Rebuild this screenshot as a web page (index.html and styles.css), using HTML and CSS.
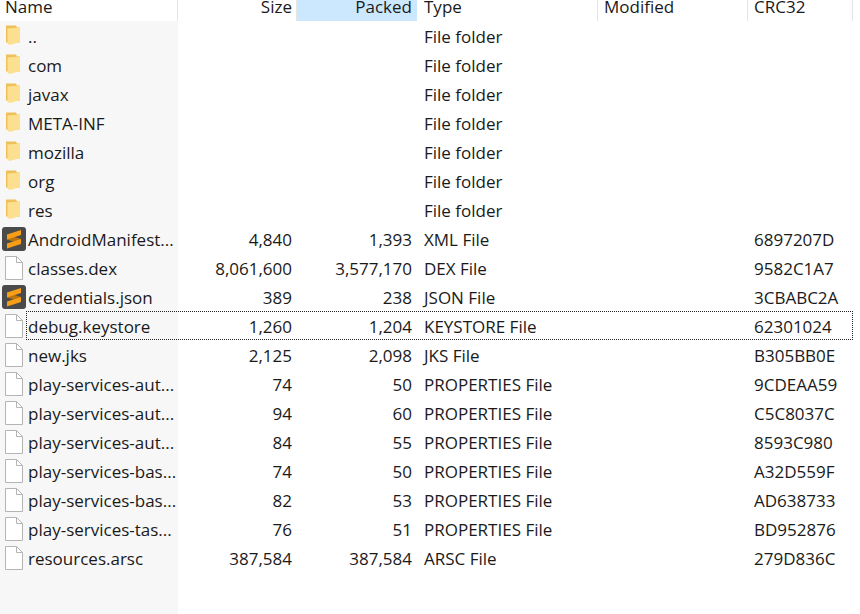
FILE: index.html
```html
<!DOCTYPE html>
<html lang="en">
<head>
    <meta charset="UTF-8">
    <title>Archive</title>
    <link rel="stylesheet" href="styles.css">
</head>
<body>
    <svg class="defs" width="0" height="0">
        <symbol id="folder" viewBox="0 0 24 24">
            <path d="M4 1.500h10l1 2h3v15H4z" fill="#efc05a"/>
            <path d="M5.500 4.500l12.500-1v14.500l-10 3-2.500-1z" fill="#fde08f"/>
        </symbol>
        <symbol id="file" viewBox="0 0 24 24">
            <path d="M3.500 .5h11l6 6v17h-17z" fill="#fff" stroke="#b4b4b4"/>
            <path d="M14.500 .5v6h6" fill="none" stroke="#b4b4b4"/>
        </symbol>
        <symbol id="sublime" viewBox="0 0 24 24">
            <rect width="24" height="24" rx="3" fill="#4a4a4a"/>
            <path d="M5 7.500l14 4.500v5L5 12.500z" fill="#b8720f"/>
            <path d="M19 3v5L5 12.500v-5z" fill="#f79e16"/>
            <path d="M19 12v5L5 21.500v-5z" fill="#f79e16"/>
        </symbol>
    </svg>

    <div class="header">
        <div class="col">Name</div>
        <div class="col right">Size</div>
        <div class="col right sorted">Packed</div>
        <div class="col type-col">Type</div>
        <div class="col">Modified</div>
        <div class="col">CRC32</div>
    </div>

    <div class="list">
        <div class="row"><div class="name"><svg class="icon"><use href="#folder"/></svg>..</div><div></div><div></div><div class="type">File folder</div><div></div><div></div></div>
        <div class="row"><div class="name"><svg class="icon"><use href="#folder"/></svg>com</div><div></div><div></div><div class="type">File folder</div><div></div><div></div></div>
        <div class="row"><div class="name"><svg class="icon"><use href="#folder"/></svg>javax</div><div></div><div></div><div class="type">File folder</div><div></div><div></div></div>
        <div class="row"><div class="name"><svg class="icon"><use href="#folder"/></svg>META-INF</div><div></div><div></div><div class="type">File folder</div><div></div><div></div></div>
        <div class="row"><div class="name"><svg class="icon"><use href="#folder"/></svg>mozilla</div><div></div><div></div><div class="type">File folder</div><div></div><div></div></div>
        <div class="row"><div class="name"><svg class="icon"><use href="#folder"/></svg>org</div><div></div><div></div><div class="type">File folder</div><div></div><div></div></div>
        <div class="row"><div class="name"><svg class="icon"><use href="#folder"/></svg>res</div><div></div><div></div><div class="type">File folder</div><div></div><div></div></div>
        <div class="row"><div class="name"><svg class="icon"><use href="#sublime"/></svg>AndroidManifest...</div><div class="num">4,840</div><div class="num">1,393</div><div class="type">XML File</div><div></div><div class="crc">6897207D</div></div>
        <div class="row"><div class="name"><svg class="icon"><use href="#file"/></svg>classes.dex</div><div class="num">8,061,600</div><div class="num">3,577,170</div><div class="type">DEX File</div><div></div><div class="crc">9582C1A7</div></div>
        <div class="row"><div class="name"><svg class="icon"><use href="#sublime"/></svg>credentials.json</div><div class="num">389</div><div class="num">238</div><div class="type">JSON File</div><div></div><div class="crc">3CBABC2A</div></div>
        <div class="row focused"><div class="name"><svg class="icon"><use href="#file"/></svg>debug.keystore</div><div class="num">1,260</div><div class="num">1,204</div><div class="type">KEYSTORE File</div><div></div><div class="crc">62301024</div></div>
        <div class="row"><div class="name"><svg class="icon"><use href="#file"/></svg>new.jks</div><div class="num">2,125</div><div class="num">2,098</div><div class="type">JKS File</div><div></div><div class="crc">B305BB0E</div></div>
        <div class="row"><div class="name"><svg class="icon"><use href="#file"/></svg>play-services-aut...</div><div class="num">74</div><div class="num">50</div><div class="type">PROPERTIES File</div><div></div><div class="crc">9CDEAA59</div></div>
        <div class="row"><div class="name"><svg class="icon"><use href="#file"/></svg>play-services-aut...</div><div class="num">94</div><div class="num">60</div><div class="type">PROPERTIES File</div><div></div><div class="crc">C5C8037C</div></div>
        <div class="row"><div class="name"><svg class="icon"><use href="#file"/></svg>play-services-aut...</div><div class="num">84</div><div class="num">55</div><div class="type">PROPERTIES File</div><div></div><div class="crc">8593C980</div></div>
        <div class="row"><div class="name"><svg class="icon"><use href="#file"/></svg>play-services-bas...</div><div class="num">74</div><div class="num">50</div><div class="type">PROPERTIES File</div><div></div><div class="crc">A32D559F</div></div>
        <div class="row"><div class="name"><svg class="icon"><use href="#file"/></svg>play-services-bas...</div><div class="num">82</div><div class="num">53</div><div class="type">PROPERTIES File</div><div></div><div class="crc">AD638733</div></div>
        <div class="row"><div class="name"><svg class="icon"><use href="#file"/></svg>play-services-tas...</div><div class="num">76</div><div class="num">51</div><div class="type">PROPERTIES File</div><div></div><div class="crc">BD952876</div></div>
        <div class="row"><div class="name"><svg class="icon"><use href="#file"/></svg>resources.arsc</div><div class="num">387,584</div><div class="num">387,584</div><div class="type">ARSC File</div><div></div><div class="crc">279D836C</div></div>
    </div>
</body>
</html>
```

FILE: styles.css
```css
html, body {
    height: 100%;
}
body {
    margin: 0;
    overflow: hidden;
    display: flex;
    flex-direction: column;
    background-color: white;
    color: #1a1a1a;
    font-family: "Open Sans", "Noto Sans", sans-serif;
    font-size: 17px;
}
.defs {
    position: absolute;
}
.header, .row {
    display: grid;
    grid-template-columns: 178px 119px 120px 181px 150px 105px;
}
.header {
    height: 21px;
    flex: none;
    overflow: hidden;
}
.col {
    height: 21px;
    line-height: 13px;
    padding: 0 4px 0 6px;
    border-right: 1px solid #e5e5e5;
    box-sizing: border-box;
}
.col:first-child {
    padding-left: 5px;
}
.right {
    text-align: right;
}
.sorted {
    background-color: #cce8ff;
    padding-right: 5px;
    border-right: none;
}
.type-col {
    padding-left: 7px;
}
.list {
    flex: 1;
    background: linear-gradient(to right, #f7f7f7 178px, white 178px);
}
.row {
    height: 29px;
    line-height: 29px;
    white-space: nowrap;
}
.row > div {
    padding-top: 1px;
}
.name {
    display: flex;
    align-items: flex-start;
    padding-left: 2px;
}
.icon {
    width: 24px;
    height: 24px;
    flex: none;
    margin: 2px 2px 0 0;
}
.num {
    text-align: right;
    padding-right: 5px;
}
.type {
    padding-left: 7px;
}
.crc {
    padding-left: 6px;
}
.focused {
    outline: 1px dotted #222;
    outline-offset: -1px;
    width: 827px;
    margin-left: 26px;
    grid-template-columns: 152px 119px 120px 181px 150px 105px;
}
.focused .name {
    margin-left: -26px;
    width: 176px;
}
```
